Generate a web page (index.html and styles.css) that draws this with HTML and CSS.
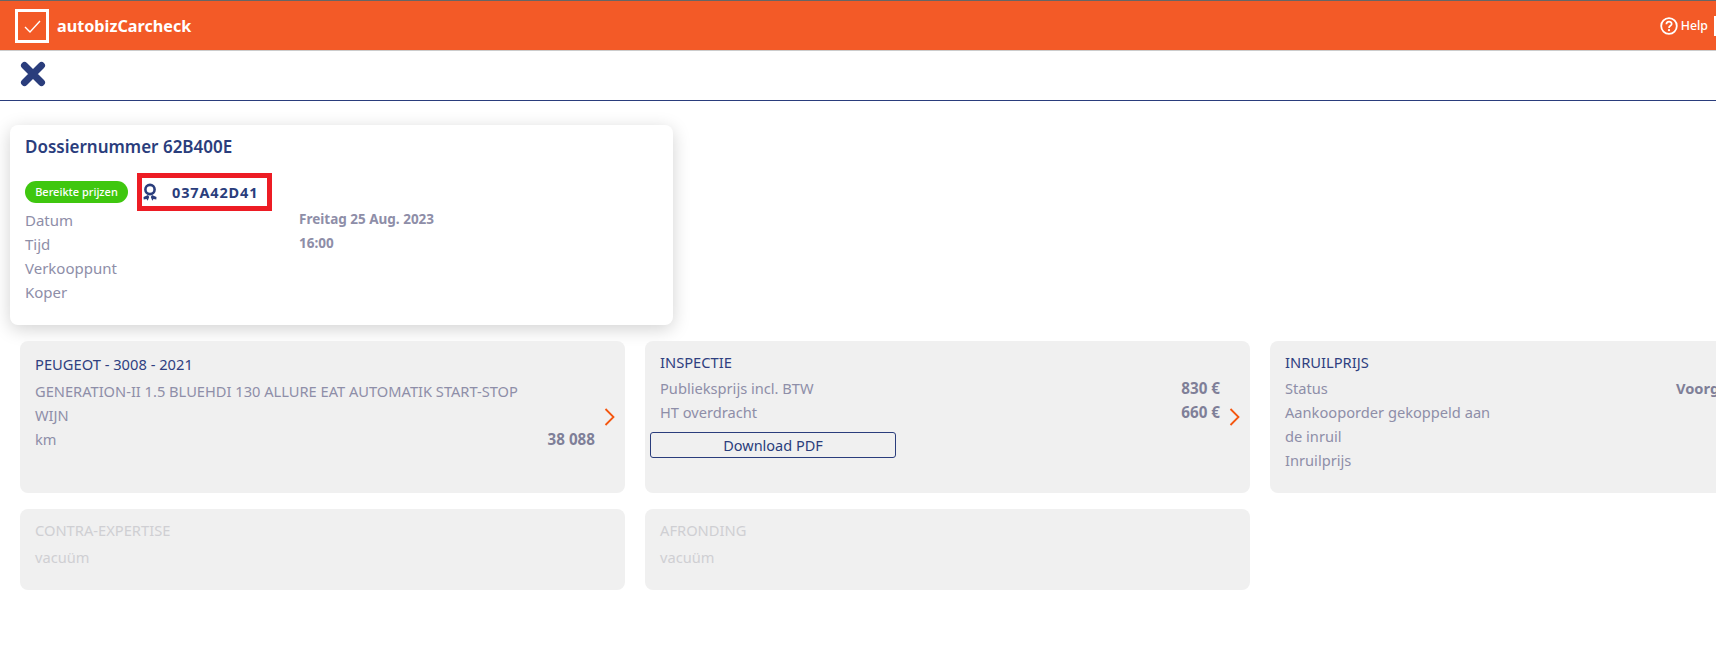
FILE: index.html
```html
<!DOCTYPE html>
<html lang="nl">
<head>
<meta charset="utf-8">
<title>autobizCarcheck</title>
<link rel="stylesheet" href="styles.css">
</head>
<body>
<header class="topbar">
  <div class="brand">
    <span class="logo">
      <svg viewBox="0 0 34 34" width="34" height="34"><path d="M10 18l5 5 10-11" fill="none" stroke="#fff" stroke-width="1.4"/></svg>
    </span>
    <span class="brand-name">autobizCarcheck</span>
  </div>
  <div class="help">
    <svg viewBox="0 0 18 18" width="18" height="18"><circle cx="9" cy="9" r="7.800" fill="none" stroke="#fff" stroke-width="1.800"/><path d="M6.400 7.200c0-3.300 5.300-3.300 5.300-.3 0 1.900-2.700 1.900-2.700 4" fill="none" stroke="#fff" stroke-width="1.700"/><circle cx="9" cy="13.200" r="1.100" fill="#fff"/></svg>
    <span>Help</span>
    <span class="help-sep"></span>
  </div>
</header>
<div class="toolbar">
  <svg viewBox="0 0 26 26" width="26" height="26"><path d="M4.500 4.500l17 17M21.500 4.500l-17 17" fill="none" stroke="#2a3d7c" stroke-width="7" stroke-linecap="round"/></svg>
</div>
<main class="main">
  <section class="summary">
    <h1 class="summary-title">Dossiernummer 62B400E</h1>
    <div class="tags">
      <span class="badge">Bereikte prijzen</span>
      <span class="ref">
        <svg viewBox="0 0 14 18" width="14" height="18"><circle cx="7" cy="6.500" r="4.600" fill="none" stroke="#2a3d7c" stroke-width="2.600"/><path d="M.5 14l4.500-2 1.200 2-1.500 3.800-1.200-1.900-2.800.6zM13.500 14l-4.500-2-1.200 2 1.500 3.800 1.200-1.900 2.800.6z" fill="#2a3d7c"/></svg>
        <span class="ref-code">037A42D41</span>
      </span>
    </div>
    <dl class="facts">
      <dt>Datum</dt><dd>Freitag 25 Aug. 2023</dd>
      <dt>Tijd</dt><dd>16:00</dd>
      <dt>Verkooppunt</dt><dd></dd>
      <dt>Koper</dt><dd></dd>
    </dl>
  </section>
  <div class="cards">
    <article class="card">
      <h2 class="card-title card-title-low">PEUGEOT - 3008 - 2021</h2>
      <p class="line">GENERATION-II 1.5 BLUEHDI 130 ALLURE EAT AUTOMATIK START-STOP</p>
      <p class="line">WIJN</p>
      <div class="line row"><span>km</span><b>38 088</b></div>
      <svg class="chevron" viewBox="0 0 11 18" width="11" height="18"><path d="M1.500 1l8 8-8 8" fill="none" stroke="#f4560f" stroke-width="1.800"/></svg>
    </article>
    <article class="card">
      <h2 class="card-title">INSPECTIE</h2>
      <div class="line row"><span>Publieksprijs incl. BTW</span><b>830 €</b></div>
      <div class="line row"><span>HT overdracht</span><b>660 €</b></div>
      <button class="download">Download PDF</button>
      <svg class="chevron" viewBox="0 0 11 18" width="11" height="18"><path d="M1.500 1l8 8-8 8" fill="none" stroke="#f4560f" stroke-width="1.800"/></svg>
    </article>
    <article class="card">
      <h2 class="card-title">INRUILPRIJS</h2>
      <div class="line wide"><span>Status</span><b>Voorgesteld</b></div>
      <div class="line wide"><span>Aankooporder gekoppeld aan de inruil</span></div>
      <div class="line wide"><span>Inruilprijs</span></div>
    </article>
    <article class="card card-empty">
      <h2 class="card-title">CONTRA-EXPERTISE</h2>
      <p class="line">vacuüm</p>
    </article>
    <article class="card card-empty">
      <h2 class="card-title">AFRONDING</h2>
      <p class="line">vacuüm</p>
    </article>
  </div>
</main>
</body>
</html>
```
FILE: styles.css
```css
* { box-sizing: border-box; }
html, body { margin: 0; height: 100%; overflow: hidden; }
body {
  width: 1716px;
  background: #fff;
  font-family: "Noto Sans", "Open Sans", sans-serif;
  color: #8e8ea8;
}
.topbar {
  height: 51px;
  border-top: 1px solid #666;
  border-bottom: 1px solid #ccc;
  background: #f35a27;
  display: flex;
  justify-content: space-between;
  align-items: center;
  padding-left: 15px;
  color: #fff;
}
.brand { display: flex; align-items: center; gap: 8px; }
.logo { width: 34px; height: 34px; border: 3px solid #fff; display: flex; align-items: center; justify-content: center; }
.logo svg { flex: none; }
.brand-name { font-size: 16.200px; font-weight: 700; }
.help { display: flex; align-items: center; gap: 3px; font-size: 12.300px; font-weight: 500; }
.help-sep { width: 2px; height: 20px; background: #fff; margin-left: 3px; align-self: flex-end; }
.toolbar {
  height: 50px;
  border-bottom: 1px solid #2a3d7c;
  padding: 0 0 3px 20px;
  display: flex;
  align-items: center;
}
.main { padding: 24px 0 0 10px; }
.summary {
  width: 663px;
  height: 200px;
  background: #fff;
  border-radius: 8px;
  box-shadow: 0 4px 18px rgba(0, 0, 0, .18);
  padding: 9px 15px 0;
}
.summary-title { margin: 0; font-size: 17px; line-height: 25px; font-weight: 600; color: #2a3d7c; }
.tags { display: flex; align-items: center; gap: 9px; margin-top: 14px; }
.badge {
  width: 103px; height: 22px; border-radius: 11px;
  background: #3fc70f; color: #fff;
  font-size: 11px; font-weight: 500; line-height: 22px; text-align: center;
}
.ref {
  display: flex; align-items: center; gap: 15px;
  width: 135px; height: 38px;
  border: 5px solid #ed1c24;
  padding-left: 1px;
  position: relative; top: 0;
}
.ref-code { font-size: 14.500px; font-weight: 700; color: #2a3d7c; letter-spacing: .85px; }
.facts {
  display: grid;
  grid-template-columns: 274px 1fr;
  grid-auto-rows: 24px;
  margin: -3px 0 0;
  font-size: 15px;
  line-height: 24px;
}
.facts dd { margin: 0; font-size: 13.500px; font-weight: 700; line-height: 23px; }
.cards {
  display: grid;
  grid-template-columns: repeat(3, 605px);
  grid-template-rows: 152px 81px;
  gap: 16px 20px;
  margin: 16px 0 0 10px;
}
.card {
  position: relative;
  background: #f0f0f0;
  border-radius: 8px;
  padding: 9px 30px 0 15px;
}
.card-title { margin: 0 0 2px; font-size: 14.700px; line-height: 24px; font-weight: 400; color: #2f3f80; }
.card-title-low { padding-top: 2px; margin-bottom: 3px; }
.line { margin: 0; font-size: 14.650px; line-height: 24px; }
.row { display: flex; justify-content: space-between; }
.row b { color: #7f7f98; font-weight: 700; font-size: 15.200px; }
.wide { display: grid; grid-template-columns: 391px max-content; }
.wide span { max-width: 220px; }
.wide b { color: #7f7f98; font-weight: 700; }
.chevron { position: absolute; right: 10px; top: 67px; }
.download {
  display: block;
  width: 246px; height: 26px;
  margin: 8px 0 0 -10px;
  padding: 0;
  border: 1px solid #2a3d7c;
  border-radius: 3px;
  background: transparent;
  color: #2a3d7c;
  font: 400 14.500px/24px "Noto Sans", "Open Sans", sans-serif;
}
.card-empty { padding-top: 9px; }
.card-empty .card-title, .card-empty .line { color: #cfcfd3; }
.card-empty .line { margin-top: 3px; }
```
